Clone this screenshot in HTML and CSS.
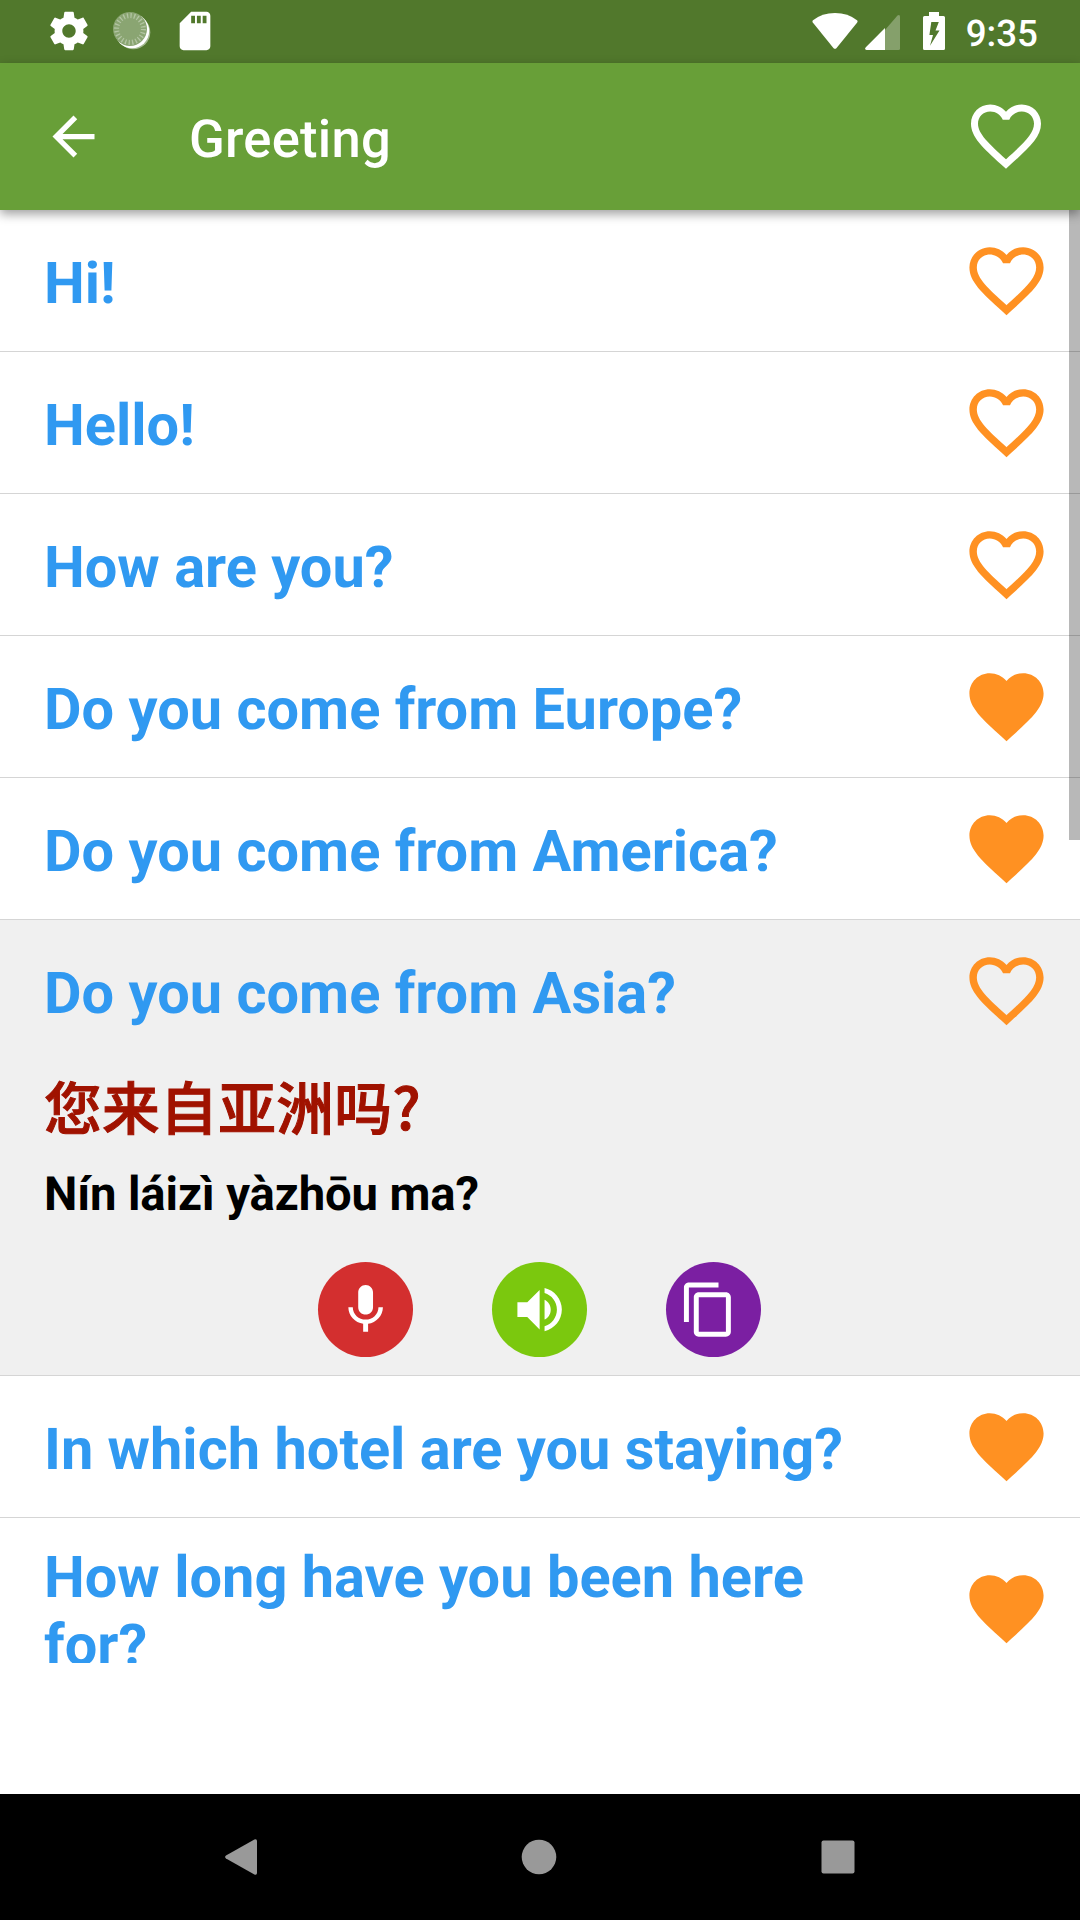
FILE: index.html
```html
<!DOCTYPE html>
<html lang="en">
<head>
  <meta charset="UTF-8">
  <title>Greeting</title>
  <link rel="stylesheet" href="styles.css">
</head>
<body>
  <!-- Shared icons -->
  <svg class="sprite" aria-hidden="true">
    <symbol id="heart" viewBox="0 0 24 24">
      <path d="M12 21.35l-1.45-1.32C5.4 15.36 2 12.28 2 8.5 2 5.42 4.42 3 7.5 3c1.74 0 3.41.81 4.5 2.09C13.09 3.81 14.76 3 16.5 3 19.58 3 22 5.42 22 8.5c0 3.78-3.4 6.86-8.55 11.54L12 21.35z"/>
    </symbol>
    <symbol id="heart-outline" viewBox="0 0 24 24">
      <path d="M16.5 3c-1.74 0-3.41.81-4.5 2.09C10.91 3.81 9.24 3 7.5 3 4.42 3 2 5.42 2 8.5c0 3.78 3.4 6.86 8.55 11.54L12 21.35l1.45-1.32C18.6 15.36 22 12.28 22 8.5 22 5.42 19.58 3 16.5 3zm-4.4 15.55l-.1.1-.1-.1C7.14 14.24 4 11.39 4 8.5 4 6.5 5.5 5 7.5 5c1.54 0 3.04.99 3.57 2.36h1.87C13.46 5.99 14.96 5 16.5 5c2 0 3.5 1.5 3.5 3.5 0 2.89-3.14 5.74-7.9 10.05z"/>
    </symbol>
  </svg>

  <div class="status-bar">
    <div class="status-left">
      <svg viewBox="0 0 24 24"><path d="M19.43 12.98c.04-.32.07-.64.07-.98s-.03-.66-.07-.98l2.11-1.65c.19-.15.24-.42.12-.64l-2-3.46c-.12-.22-.39-.3-.61-.22l-2.49 1c-.52-.4-1.08-.73-1.69-.98l-.38-2.65C14.46 2.18 14.25 2 14 2h-4c-.25 0-.46.18-.49.42l-.38 2.65c-.61.25-1.17.59-1.69.98l-2.49-1c-.23-.09-.49 0-.61.22l-2 3.46c-.13.22-.07.49.12.64l2.11 1.65c-.04.32-.07.65-.07.98s.03.66.07.98l-2.11 1.65c-.19.15-.24.42-.12.64l2 3.46c.12.22.39.3.61.22l2.49-1c.52.4 1.08.73 1.69.98l.38 2.65c.03.24.24.42.49.42h4c.25 0 .46-.18.49-.42l.38-2.65c.61-.25 1.17-.59 1.69-.98l2.49 1c.23.09.49 0 .61-.22l2-3.46c.12-.22.07-.49-.12-.64l-2.11-1.65zM12 15.5c-1.93 0-3.5-1.57-3.5-3.5s1.57-3.5 3.5-3.5 3.5 1.57 3.5 3.5-1.57 3.5-3.5 3.5z"/></svg>
      <svg viewBox="0 0 46 46">
        <circle cx="24.3" cy="24.3" r="17" fill="#a3b98f"/>
        <circle cx="23" cy="23" r="17.2" fill="#fff"/>
        <circle cx="21" cy="21" r="17" fill="#8aa572"/>
        <circle cx="21" cy="21" r="13.4" fill="none" stroke="#b3c5a3" stroke-width="5" stroke-dasharray="1.3 2.21"/>
      </svg>
      <svg viewBox="0 0 24 24"><path d="M18 2h-8L4.02 8 4 20c0 1.1.9 2 2 2h12c1.1 0 2-.9 2-2V4c0-1.1-.9-2-2-2zm-6 6h-2V4h2v4zm3 0h-2V4h2v4zm3 0h-2V4h2v4z"/></svg>
    </div>
    <div class="status-right">
      <svg class="wifi" viewBox="0 0 46 36"><path d="M1 7.3Q10 0 23 0T45 7.3Q46 8.3 45.2 9.5L24.4 35.2Q23 36.5 21.6 35.2L.8 9.5Q0 8.3 1 7.3z"/></svg>
      <svg class="signal" viewBox="0 0 35 35">
        <path d="M20 15 32.5.6Q35-.8 35 1.8V33.5Q35 35 33.5 35H20z" opacity=".3"/>
        <path d="M20 13V35H1.5Q-.8 34.5.6 32.4z"/>
      </svg>
      <svg class="battery" viewBox="0 0 22 38"><path fill-rule="evenodd" d="M6 0h10v4h4.5Q22 4 22 5.5v31Q22 38 20.5 38h-19Q0 38 0 36.5v-31Q0 4 1.5 4H6zM8.3 10 6.4 23H10L7 33.7 16.5 18.5H12.5L15.8 10z"/></svg>
      <span class="clock">9:35</span>
    </div>
  </div>

  <header class="app-bar">
    <svg class="back" viewBox="0 0 24 24"><path d="M20 11H7.83l5.59-5.59L12 4l-8 8 8 8 1.41-1.41L7.83 13H20v-2z"/></svg>
    <h1>Greeting</h1>
    <svg class="bar-heart"><use href="#heart-outline"/></svg>
  </header>

  <main class="content">
    <div class="scrollbar"></div>
    <ul class="phrases">
      <li>
        <div class="phrase"><span>Hi!</span><svg class="heart"><use href="#heart-outline"/></svg></div>
      </li>
      <li>
        <div class="phrase"><span>Hello!</span><svg class="heart"><use href="#heart-outline"/></svg></div>
      </li>
      <li>
        <div class="phrase"><span>How are you?</span><svg class="heart"><use href="#heart-outline"/></svg></div>
      </li>
      <li>
        <div class="phrase"><span>Do you come from Europe?</span><svg class="heart"><use href="#heart"/></svg></div>
      </li>
      <li>
        <div class="phrase"><span>Do you come from America?</span><svg class="heart"><use href="#heart"/></svg></div>
      </li>
      <li class="open">
        <div class="phrase"><span>Do you come from Asia?</span><svg class="heart"><use href="#heart-outline"/></svg></div>
        <div class="translation">
          <p class="hanzi" lang="zh-CN">您来自亚洲吗?</p>
          <p class="pinyin">Nín láizì yàzhōu ma?</p>
          <div class="actions">
            <button class="record"><svg viewBox="0 0 24 24"><path d="M12 14c1.66 0 3-1.34 3-3V5c0-1.66-1.34-3-3-3S9 3.34 9 5v6c0 1.66 1.34 3 3 3zm5.2-3c0 2.9-2.44 5.05-5.2 5.05S6.8 13.9 6.8 11H5c0 3.41 2.72 6.23 6 6.72V21h2v-3.28c3.28-.48 6-3.3 6-6.72h-1.8z"/></svg></button>
            <button class="listen"><svg viewBox="0 0 24 24"><path d="M3 9v6h4l5 5V4L7 9H3zm13.5 3c0-1.77-1.02-3.29-2.5-4.03v8.05c1.48-.73 2.5-2.25 2.5-4.02zM14 3.23v2.06c2.89.86 5 3.54 5 6.71s-2.11 5.85-5 6.71v2.06c4.01-.91 7-4.49 7-8.77s-2.99-7.86-7-8.77z"/></svg></button>
            <button class="copy"><svg viewBox="0 0 24 24"><path d="M16 1H4c-1.1 0-2 .9-2 2v14h2V3h12V1zm3 4H8c-1.1 0-2 .9-2 2v14c0 1.1.9 2 2 2h11c1.1 0 2-.9 2-2V7c0-1.1-.9-2-2-2zm0 16H8V7h11v14z"/></svg></button>
          </div>
        </div>
      </li>
      <li>
        <div class="phrase"><span>In which hotel are you staying?</span><svg class="heart"><use href="#heart"/></svg></div>
      </li>
      <li>
        <div class="phrase two-line"><span>How long have you been here for?</span><svg class="heart"><use href="#heart"/></svg></div>
      </li>
    </ul>
  </main>

  <nav class="nav-bar">
    <svg viewBox="0 0 36 36"><path d="M3 16.6 31.4.5Q34-.3 34 2v32q0 2.3-2.6 1.5L3 19.4q-1.8-1.4 0-2.8z"/></svg>
    <svg viewBox="0 0 36 36"><circle cx="18" cy="18" r="17.3"/></svg>
    <svg viewBox="0 0 36 36"><rect x="1.5" y="1.5" width="33" height="33" rx="2"/></svg>
  </nav>
</body>
</html>
```
FILE: styles.css
```css
* {
  box-sizing: border-box;
}
body {
  margin: 0;
  width: 1080px;
  height: 1920px;
  display: flex;
  flex-direction: column;
  overflow: hidden;
  background: #fff;
  font-family: Roboto, "Noto Sans CJK SC", sans-serif;
  text-rendering: geometricPrecision;
}
svg {
  display: block;
  flex: none;
  fill: currentColor;
}
.sprite {
  display: none;
}

/* Status bar */
.status-bar {
  height: 63px;
  flex: none;
  display: flex;
  justify-content: space-between;
  background: #51782c;
  color: #fff;
}
.status-left {
  display: flex;
  align-items: center;
  gap: 17px;
  padding: 0 0 1px 45.5px;
}
.status-left svg {
  width: 46px;
  height: 46px;
}
.status-right {
  display: flex;
  align-items: flex-end;
  padding: 0 42px 13px 0;
}
.wifi {
  width: 46px;
  height: 36px;
  margin: 0 7px 1px 0;
}
.signal {
  width: 35px;
  height: 35px;
  margin-right: 23px;
}
.battery {
  width: 22px;
  height: 38px;
  margin-right: 21px;
}
.clock {
  font-size: 36.75px;
  font-weight: 500;
  line-height: 43px;
  height: 38px;
}

/* App bar */
.app-bar {
  position: relative;
  z-index: 1;
  height: 147px;
  flex: none;
  display: flex;
  align-items: center;
  padding: 0 32px 0 42px;
  background: #689f38;
  color: #fff;
  box-shadow: 0 4px 10px rgba(0, 0, 0, .38);
}
.back {
  width: 63px;
  height: 63px;
}
.app-bar h1 {
  flex: 1;
  margin: 5px 0 0 84px;
  font-size: 52.5px;
  font-weight: 500;
  letter-spacing: .25px;
}
.bar-heart {
  width: 84px;
  height: 84px;
  margin-bottom: 2px;
}

/* Phrase list */
.content {
  position: relative;
  flex: 1;
}
.scrollbar {
  position: absolute;
  top: 0;
  right: 0;
  width: 11px;
  height: 630px;
  background: rgba(0, 0, 0, .28);
}
.phrases {
  height: 1453px;
  margin: 0;
  padding: 0;
  overflow: hidden;
  list-style: none;
}
.phrases li {
  border-bottom: 1px solid #d5d5d5;
}
.phrase {
  min-height: 141px;
  display: flex;
  align-items: center;
  justify-content: space-between;
  padding: 22px 29px 22px 44px;
  color: #3099f1;
  font-size: 57.75px;
  font-weight: 700;
  line-height: 68px;
}
.phrase span {
  max-width: 860px;
  margin: 3px 0 -3px;
}
.two-line span {
  margin: 4px 0 -4px;
}
.heart {
  width: 89px;
  height: 89px;
  color: #ff9122;
}
.open {
  background: #f0f0f0;
}
.translation {
  padding: 0 44px 18px;
  font-weight: 700;
}
.translation p {
  margin: 0;
}
.hanzi {
  padding-top: 2px;
  color: #a01200;
  font-family: "Noto Sans CJK SC", sans-serif;
  font-size: 57.75px;
  font-weight: 500;
  letter-spacing: .3px;
  line-height: 84px;
  -webkit-text-stroke: 1px #a01200;
}
.pinyin {
  padding-top: 19px;
  font-size: 47.25px;
  letter-spacing: -.12px;
  line-height: 56px;
}
.actions {
  display: flex;
  justify-content: center;
  gap: 79px;
  padding: 40px 2px 0 0;
}
.actions button {
  width: 95px;
  height: 95px;
  display: flex;
  align-items: center;
  justify-content: center;
  padding: 0 0 0 1px;
  border: 0;
  border-radius: 50%;
  color: #fff;
}
.actions svg {
  width: 59.25px;
  height: 59.25px;
}
.record {
  background: #d32f2f;
}
.listen {
  background: #7bc80e;
}
.actions .copy {
  padding: 0 9px 0 0;
  background: #7b1fa2;
}

/* System navigation */
.nav-bar {
  height: 126px;
  flex: none;
  display: flex;
  align-items: center;
  justify-content: center;
  gap: 262.5px;
  padding: 0 2px 1px 0;
  background: #000;
  color: #999;
}
.nav-bar svg {
  width: 36px;
  height: 36px;
}
```
